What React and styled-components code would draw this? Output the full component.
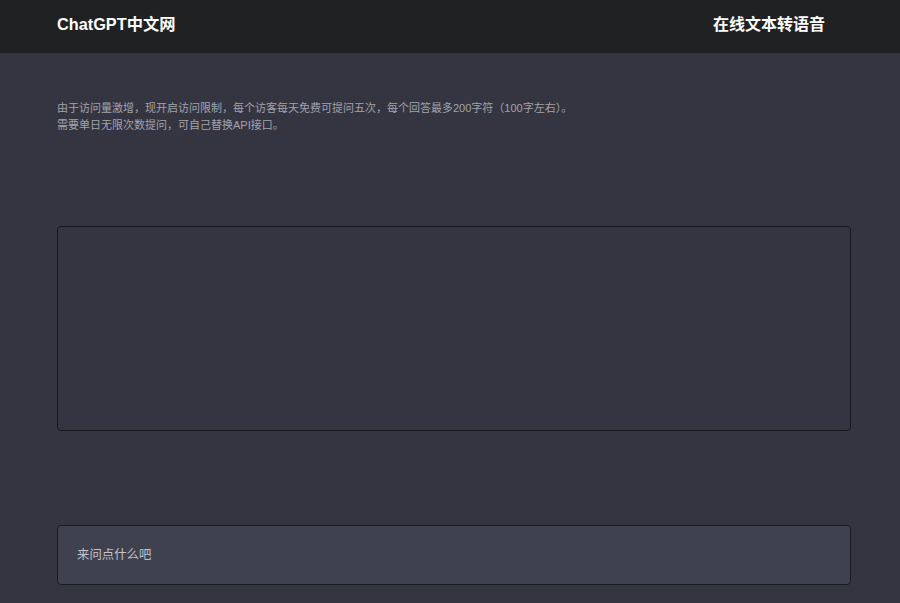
import styled, { createGlobalStyle } from 'styled-components'

const GlobalStyle = createGlobalStyle`
	html, body {
		margin: 0;
		padding: 0;
		background: #343541;
		font-family: "Liberation Sans", "Noto Sans CJK SC", sans-serif;
	}
`

const Page = styled.div`
	min-height: 603px;
	background: #343541;
	display: flex;
	flex-direction: column;
`

const Header = styled.header`
	height: 53px;
	background: #202123;
	display: flex;
	align-items: center;
	justify-content: space-between;
	padding: 0 75px 0 57px;
	flex-shrink: 0;
`

const Brand = styled.div`
	color: #ffffff;
	font-size: 16.3px;
	font-weight: bold;
	margin-top: -8px;
`

const Title = styled.div`
	color: #ffffff;
	font-size: 16px;
	font-weight: bold;
	margin-top: -8px;
`

const Main = styled.main`
	display: flex;
	flex-direction: column;
	padding: 47px 49px 0 57px;
`

const Notice = styled.div`
	color: #a3a3ab;
	font-size: 11px;
	line-height: 17px;
`

const Output = styled.div`
	margin-top: 92px;
	height: 203px;
	border: 1px solid #17181d;
	border-radius: 4px;
	background: #343541;
`

const InputBox = styled.div`
	margin-top: 94px;
	height: 58px;
	border: 1px solid #1a1b21;
	border-radius: 4px;
	background: #40414f;
	display: flex;
	align-items: center;
	padding: 0 19px;
`

const Input = styled.input`
	flex: 1;
	background: transparent;
	border: none;
	outline: none;
	color: #ececf1;
	font-size: 12.4px;
	font-family: inherit;
	padding: 0;
	&::placeholder {
		color: #c2c2cb;
	}
`

export default function App() {
	return (
		<>
			<GlobalStyle />
			<Page>
				<Header>
					<Brand>ChatGPT中文网</Brand>
					<Title>在线文本转语音</Title>
				</Header>
				<Main>
					<Notice>
						由于访问量激增，现开启访问限制，每个访客每天免费可提问五次，每个回答最多200字符（100字左右）。
						<br />
						需要单日无限次数提问，可自己替换API接口。
					</Notice>
					<Output />
					<InputBox>
						<Input placeholder='来问点什么吧' />
					</InputBox>
				</Main>
			</Page>
		</>
	)
}
